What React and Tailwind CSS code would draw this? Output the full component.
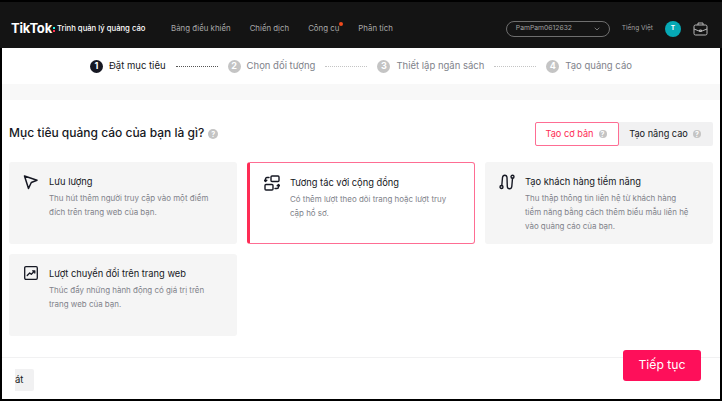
import { ChevronDown } from "lucide-react";

const navItems = ["Bảng điều khiển", "Chiến dịch", "Công cụ", "Phân tích"];

const steps = [
  { n: 1, label: "Đặt mục tiêu", active: true },
  { n: 2, label: "Chọn đối tượng" },
  { n: 3, label: "Thiết lập ngân sách" },
  { n: 4, label: "Tạo quảng cáo" },
];

function Help({ className }) {
  return (
    <span className={`inline-flex items-center justify-center rounded-full bg-[#c4c4c4] text-white text-[7px] font-bold leading-none ${className}`}>
      ?
    </span>
  );
}

function Pointer() {
  return (
    <svg width="16" height="16" viewBox="0 0 16 16" fill="none" stroke="#161823" strokeWidth="1.5" strokeLinejoin="round">
      <path d="M1.5 2 L14 6.3 L8.3 8.5 L5.5 14.5 Z" />
    </svg>
  );
}

function Community() {
  return (
    <svg width="16" height="16" viewBox="0 0 16 16" fill="none" stroke="#161823" strokeWidth="1.4" strokeLinecap="round" strokeLinejoin="round">
      <rect x="7" y="1" width="8" height="5.5" rx="1" />
      <rect x="1" y="9.5" width="8" height="5.5" rx="1" />
      <path d="M5 2.5 H3 Q1.5 2.5 1.5 4 V6.5 M0.3 5.3 L1.5 6.6 L2.8 5.3" />
      <path d="M11 13.5 H13 Q14.5 13.5 14.5 12 V9.5 M13.2 10.7 L14.5 9.4 L15.7 10.7" />
    </svg>
  );
}

function Leads() {
  return (
    <svg width="16" height="16" viewBox="0 0 16 16" fill="none" stroke="#161823" strokeWidth="1.4" strokeLinecap="round" strokeLinejoin="round">
      <circle cx="2.5" cy="13" r="1.5" />
      <circle cx="13.5" cy="2.8" r="1.5" />
      <path d="M2.8 11.5 L3.5 3.5 Q3.8 1.2 5.8 1.2 Q7.8 1.2 8 3.5 L8.3 12.5 Q8.5 14.8 10.5 14.8 Q12.5 14.8 12.8 12.5 L13.5 4.3" />
    </svg>
  );
}

function Conversion() {
  return (
    <svg width="14" height="14" viewBox="0 0 14 14" fill="none" stroke="#161823" strokeLinecap="round" strokeLinejoin="round">
      <rect x="0.7" y="0.7" width="12.6" height="12.6" rx="1.2" strokeWidth="1.3" />
      <path d="M3.2 9.5 L5.7 7 L7.3 8.3 L10.6 5 M8.6 4.8 H10.8 V7" strokeWidth="1.3" />
    </svg>
  );
}

function Briefcase() {
  return (
    <svg width="15" height="14" viewBox="0 0 15 14" fill="none" stroke="#b8b8b8" strokeWidth="1" strokeLinejoin="round">
      <rect x="1" y="3" width="13" height="10" rx="1.5" />
      <path d="M5 3 V1 H10 V3 M1 7 L6 9 H9 L14 7" />
      <path d="M6.5 8 H8.5 V9.5 H6.5 Z" />
    </svg>
  );
}

function Card({ icon, title, lines, selected }) {
  return (
    <div
      className={`relative h-[82px] rounded-[3px] pt-[12px] pl-[13px] flex gap-[9px] ${
        selected
          ? "bg-white border border-[#fe6d93] border-l-[3px] border-l-[#fe2c55] pl-[11px] pt-[11px]"
          : "bg-[#f5f5f5]"
      }`}
    >
      <div className="w-[18px] h-[18px] shrink-0 flex items-start justify-center">{icon}</div>
      <div className="pt-[1px]">
        <div className="text-[9.3px] leading-[14px] text-[#161823]">{title}</div>
        <div className="mt-[2px] text-[7.95px] leading-[14px] text-[#80828a]">
          {lines.map((l) => (
            <div key={l}>{l}</div>
          ))}
        </div>
      </div>
    </div>
  );
}

export default function App() {
  return (
    <div className="w-[722px] h-[401px] overflow-hidden bg-black pt-[2px] font-['Inter','Liberation_Sans',sans-serif] flex flex-col">
      <header className="h-[46px] shrink-0 bg-[#141414] flex items-center pt-[7px] pl-[11px] pr-[14px] text-[#a8a8a8]">
        <div className="flex items-center w-[160px]">
          <span className="text-white font-bold text-[13px] tracking-[-0.2px]">TikTok</span>
          <span className="ml-[1.5px] mt-[2px] flex flex-col gap-[1.5px]">
            <span className="w-[1.5px] h-[1.5px] bg-[#25f4ee]" />
            <span className="w-[1.5px] h-[1.5px] bg-[#fe2c55]" />
          </span>
          <span className="text-white text-[7.7px] ml-[2px] font-medium">Trình quản lý quảng cáo</span>
        </div>
        <nav className="flex items-center gap-[19px] text-[7.85px]">
          {navItems.map((item) => (
            <span key={item} className="relative">
              {item}
              {item === "Công cụ" && (
                <span className="absolute -top-[1px] -right-[4px] w-[4px] h-[4px] rounded-full bg-[#f04a1d]" />
              )}
            </span>
          ))}
        </nav>
        <div className="ml-auto flex items-center">
          <div className="w-[104px] h-[16px] rounded-full border border-[#6e6e6e] flex items-center justify-between pl-[9px] pr-[8px] text-[6.8px] text-[#a0a0a0]">
            PamPam0612632
            <ChevronDown size={8} />
          </div>
          <span className="ml-[12px] text-[6.5px] text-[#a0a0a0]">Tiếng Việt</span>
          <span className="ml-[12px] w-[16px] h-[16px] rounded-full bg-[#06a9b5] text-white text-[6.5px] font-bold flex items-center justify-center">T</span>
          <span className="ml-[12px] flex"><Briefcase /></span>
        </div>
      </header>

      <main className="flex-1 min-h-0 ml-[2px] mr-[2px] mb-[2px] bg-white flex flex-col">
        <div className="h-[36px] shrink-0 flex items-center pl-[88px] text-[9.5px] text-[#80828a]">
          {steps.map((s, i) => (
            <div key={s.n} className="flex items-center">
              {i > 0 && (
                <span
                  className={`mx-[10px] w-[42px] border-t border-dotted ${
                    i === 1 ? "border-[#555]" : "border-[#c4c4c4]"
                  }`}
                />
              )}
              <span
                className={`w-[13px] h-[13px] rounded-full flex items-center justify-center text-white text-[9px] font-bold ${
                  s.active ? "bg-[#161823]" : "bg-[#c4c4c4]"
                }`}
              >
                {s.n}
              </span>
              <span className={`ml-[6px] ${s.active ? "text-[#161823]" : ""}`}>{s.label}</span>
            </div>
          ))}
        </div>
        <div className="h-[16px] shrink-0 bg-[#f8f8f8]" />

        <div className="flex-1 min-h-0 pl-[7px] pr-[7px] flex flex-col">
          <div className="flex items-center justify-between h-[62px] pt-[6px] shrink-0">
            <div className="flex items-center -mt-[3px]">
              <span className="text-[12px] font-medium text-[#161823]">Mục tiêu quảng cáo của bạn là gì?</span>
              <Help className="w-[10px] h-[10px] ml-[4px] mt-[3px]" />
            </div>
            <div className="flex h-[24px] rounded-[2px] bg-[#f1f1f2] text-[9.2px]">
              <div className="w-[84px] pr-[2px] rounded-[2px] border border-[#fe6d93] bg-white text-[#fe2c55] flex items-center justify-center gap-[5px]">
                Tạo cơ bản
                <Help className="w-[8px] h-[8px]" />
              </div>
              <div className="w-[94px] pr-[2px] text-[#161823] flex items-center justify-center gap-[5px]">
                Tạo nâng cao
                <Help className="w-[8px] h-[8px]" />
              </div>
            </div>
          </div>

          <div className="grid grid-cols-[228px_228px_228px] gap-[10px]">
            <Card
              icon={<Pointer />}
              title="Lưu lượng"
              lines={["Thu hút thêm người truy cập vào một điểm", "đích trên trang web của bạn."]}
            />
            <Card
              selected
              icon={<Community />}
              title="Tương tác với cộng đồng"
              lines={["Có thêm lượt theo dõi trang hoặc lượt truy", "cập hồ sơ."]}
            />
            <Card
              icon={<Leads />}
              title="Tạo khách hàng tiềm năng"
              lines={["Thu thập thông tin liên hệ từ khách hàng", "tiềm năng bằng cách thêm biểu mẫu liên hệ", "vào quảng cáo của bạn."]}
            />
            <Card
              icon={<Conversion />}
              title="Lượt chuyển đổi trên trang web"
              lines={["Thúc đẩy những hành động có giá trị trên", "trang web của bạn."]}
            />
          </div>
        </div>

        <div className="h-[42px] shrink-0 border-t border-[#f1f1f2] relative">
          <div className="absolute left-[0px] top-[11px] w-[32px] h-[22px] rounded-[2px] bg-[#f1f1f2] overflow-hidden text-[9.5px] text-[#161823] flex items-center">
            <span className="w-[13px] h-full bg-white" />
            <span>át</span>
          </div>
          <div className="absolute right-[19px] -top-[8px] w-[78px] h-[31px] rounded-[3px] bg-[#fe0f5a] text-white text-[12.2px] flex items-center justify-center">
            Tiếp tục
          </div>
        </div>
      </main>
    </div>
  );
}
